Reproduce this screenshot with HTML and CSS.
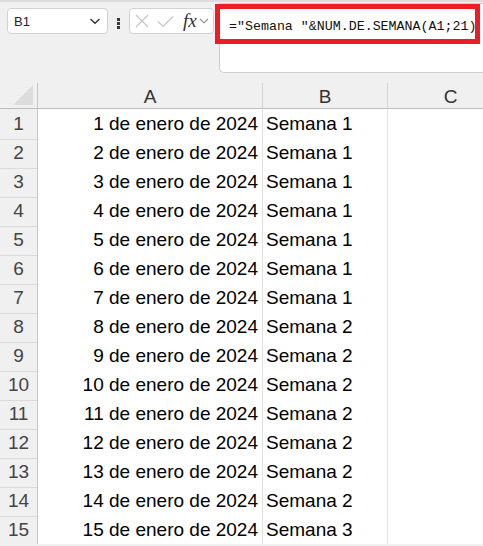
FILE: index.html
```html
<!DOCTYPE html>
<html lang="es">
<head>
<meta charset="utf-8">
<title>Hoja</title>
<link rel="stylesheet" href="styles.css">
</head>
<body>
<div class="app">
  <div class="toolbar">
    <div class="namebox">
      <span class="ref">B1</span>
      <svg class="chev" width="12" height="8" viewBox="0 0 12 8"><path d="M1.5 2 L6 6.2 L10.5 2" fill="none" stroke="#333" stroke-width="1.4"/></svg>
    </div>
    <div class="dots"><i></i><i></i><i></i></div>
    <div class="fbuttons">
      <svg class="ico x" width="14" height="14" viewBox="0 0 14 14"><path d="M1 1 L13 13 M13 1 L1 13" stroke="#c4c4c4" stroke-width="1.1" fill="none"/></svg>
      <svg class="ico ok" width="17" height="13" viewBox="0 0 17 13"><path d="M1 6.5 L6 11.5 L16 1.5" stroke="#c4c4c4" stroke-width="1.1" fill="none"/></svg>
      <span class="fx">fx</span>
      <svg class="chev small" width="10" height="6" viewBox="0 0 10 6"><path d="M1 1 L5 4.8 L9 1" fill="none" stroke="#8a8a8a" stroke-width="1.1"/></svg>
    </div>
    <div class="formula">
      <span class="ftext">="Semana "&amp;NUM.DE.SEMANA(A1;21)</span>
      <div class="highlight"></div>
    </div>
  </div>
  <div class="sheet">
    <div class="grid">
      <div class="corner"><span class="tri"></span></div>
      <div class="colh">A</div>
      <div class="colh">B</div>
      <div class="colh last">C</div>
    </div>
    <div class="rows" id="rows"></div>
  </div>
</div>
<script>
  var rows = document.getElementById('rows');
  var html = '';
  for (var i = 1; i <= 15; i++) {
    var w = Math.floor((i - 1) / 7) + 1;
    html += '<div class="grid row"><div class="rowh">' + i + '</div>' +
      '<div class="cell a">' + i + ' de enero de 2024</div>' +
      '<div class="cell b">Semana ' + w + '</div>' +
      '<div class="cell c"></div></div>';
  }
  rows.innerHTML = html;
</script>
</body>
</html>
```
FILE: styles.css
```css
* { box-sizing: border-box; }
html, body { margin: 0; padding: 0; }
body {
  width: 483px;
  height: 546px;
  overflow: hidden;
  background: #f0f0f0;
  font-family: "Liberation Sans", Arial, sans-serif;
}
.app {
  width: 483px;
  overflow: hidden;
  border-top: 2px solid #dcdcdc;
}
.toolbar {
  display: flex;
  align-items: flex-start;
  height: 81px;
}
.namebox {
  margin: 6px 0 0 7px;
  width: 101px;
  height: 26px;
  background: #fff;
  border: 1px solid #d2d2d2;
  border-radius: 4px;
  display: flex;
  align-items: center;
  justify-content: space-between;
  padding: 0 6px 0 6px;
}
.ref {
  font-family: "Liberation Sans", Arial, sans-serif;
  font-size: 13px;
  color: #222;
}
.dots {
  width: 21px;
  margin-top: 16px;
  display: flex;
  flex-direction: column;
  align-items: center;
  gap: 1.5px;
}
.dots i {
  display: block;
  width: 2.5px;
  height: 2.5px;
  background: #3a3a3a;
}
.fbuttons {
  margin-top: 6px;
  width: 85px;
  height: 26px;
  background: #fff;
  border: 1px solid #d2d2d2;
  border-radius: 4px;
  display: flex;
  align-items: center;
  padding: 0 0 0 5px;
}
.fbuttons .x { margin-right: 8px; }
.fbuttons .ok { margin-right: 9px; }
.fx {
  font-family: "Liberation Serif", "Times New Roman", serif;
  font-style: italic;
  font-size: 19px;
  color: #333;
  margin-right: 2px;
  line-height: 1;
  margin-top: -2px;
}
.formula {
  position: relative;
  margin: 1px 0 0 5px;
  flex: 1;
  height: 70px;
  background: #fff;
  border: 1px solid #cfcfcf;
  border-right: none;
  border-radius: 0 0 0 5px;
  padding: 12px 0 0 9px;
}
.ftext {
  font-family: "Liberation Mono", "Courier New", monospace;
  font-size: 13.3px;
  color: #111;
  white-space: nowrap;
}
.highlight {
  position: absolute;
  left: -5px;
  top: 0;
  width: 265px;
  height: 40px;
  border: 5px solid #ee1c25;
}
.sheet {
  width: 483px;
  overflow: hidden;
}
.grid {
  display: grid;
  grid-template-columns: 38px 225px 125px 126px;
  width: 514px;
}
.corner {
  height: 26px;
  border-right: 1px solid #c6c6c6;
  border-bottom: 1px solid #bdbdbd;
  position: relative;
}
.tri {
  position: absolute;
  right: 4px;
  bottom: 3px;
  width: 0;
  height: 0;
  border-left: 20px solid transparent;
  border-bottom: 20px solid #dcdcdc;
}
.colh {
  height: 26px;
  border-right: 1px solid #d4d4d4;
  border-bottom: 1px solid #bdbdbd;
  text-align: center;
  font-size: 19px;
  line-height: 28px;
  color: #333;
}
.row { height: 29px; }
.rowh {
  border-right: 1px solid #c6c6c6;
  border-bottom: 1px solid #dadada;
  text-align: center;
  font-size: 19px;
  line-height: 30px;
  color: #444;
}
.cell {
  background: #fff;
  border-right: 1px solid #e0e0e0;
  border-bottom: 1px solid #e0e0e0;
  font-size: 19px;
  line-height: 30px;
  color: #000;
  white-space: nowrap;
  overflow: hidden;
}
.cell.a { text-align: right; padding-right: 4px; }
.cell.b { padding-left: 3px; }
```
